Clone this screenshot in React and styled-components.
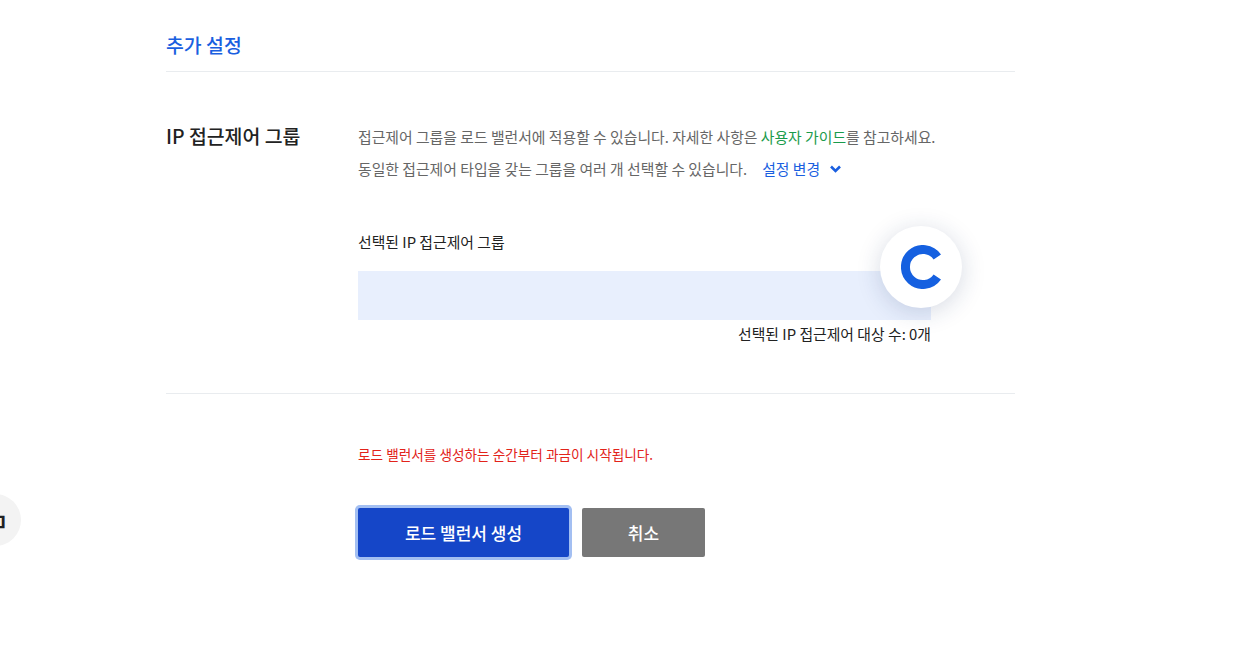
import React from 'react';
import styled, { createGlobalStyle } from 'styled-components';

const GlobalStyle = createGlobalStyle`
  html, body {
    margin: 0;
    padding: 0;
    background: #fff;
    font-family: "Noto Sans CJK KR", "Noto Sans", sans-serif;
  }
  * {
    box-sizing: border-box;
  }
`;

const Page = styled.div`
  position: relative;
  width: 1233px;
  height: 648px;
  overflow: hidden;
`;

const Content = styled.div`
  width: 849px;
  margin-left: 166px;
  padding-top: 29px;
`;

const SectionTitle = styled.h3`
  margin: 0;
  height: 43px;
  border-bottom: 1px solid #e9ecef;
  color: #1a5fe0;
  font-size: 19.4px;
  font-weight: 500;
  line-height: 32px;
`;

const Row = styled.div`
  display: flex;
  padding-top: 49px;
  height: 322px;
  border-bottom: 1px solid #e9ecef;
`;

const RowLabel = styled.div`
  width: 192px;
  flex: none;
  color: #222;
  font-size: 19.4px;
  font-weight: 500;
  line-height: 30px;
`;

const RowBody = styled.div`
  width: 573px;
`;

const Desc = styled.p`
  margin: 0;
  color: #666;
  font-size: 14.85px;
  line-height: 32px;
  white-space: nowrap;
`;

const GuideLink = styled.span`
  color: #1a9b4b;
`;

const ChangeLink = styled.span`
  display: inline-flex;
  align-items: center;
  gap: 10px;
  margin-left: 15px;
  color: #1a5fe0;
`;

const SelectedLabel = styled.div`
  margin-top: 45px;
  color: #222;
  font-size: 14.85px;
  line-height: 24px;
`;

const SelectedBox = styled.div`
  height: 49px;
  margin-top: 17px;
  background: #e8effd;
`;

const SelectedCount = styled.div`
  color: #222;
  font-size: 14.85px;
  line-height: 28px;
  text-align: right;
`;

const Footer = styled.div`
  padding: 48px 0 0 192px;
`;

const Notice = styled.p`
  margin: 0;
  color: #e2231a;
  font-size: 13.65px;
  line-height: 24px;
`;

const Buttons = styled.div`
  display: flex;
  gap: 13px;
  margin-top: 42px;
`;

const Button = styled.button`
  width: ${(p) => (p.$primary ? '211px' : '123px')};
  height: 49px;
  border: 0;
  border-radius: 2px;
  background: ${(p) => (p.$primary ? '#1546c8' : '#777')};
  box-shadow: ${(p) => (p.$primary ? '0 0 0 3px #a3bff2' : 'none')};
  color: #fff;
  font-family: inherit;
  font-size: 17px;
  font-weight: 500;
`;

const LogoBadge = styled.div`
  position: absolute;
  left: 880px;
  top: 226px;
  display: flex;
  align-items: center;
  justify-content: center;
  width: 82px;
  height: 82px;
  border-radius: 50%;
  background: #fff;
  box-shadow: 0 4px 24px rgba(30, 50, 100, 0.18);
`;

const SideBadge = styled.div`
  position: absolute;
  left: -31px;
  top: 494px;
  display: flex;
  align-items: center;
  justify-content: flex-end;
  width: 52px;
  height: 52px;
  padding-right: 12px;
  border-radius: 50%;
  background: #f3f3f3;
  color: #222;
  font-size: 26px;
  font-weight: 500;
`;

const Chevron = () => (
  <svg width="11" height="8" viewBox="0 0 11 8" fill="none">
    <path d="M1 1.5L5.5 6L10 1.5" stroke="#1a5fe0" strokeWidth="2.6" />
  </svg>
);

const LogoC = () => (
  <svg width="41" height="44" viewBox="0 0 41 44" fill="none">
    <path
      d="M36.3 12A17.5 17.5 0 1 0 36.3 32"
      stroke="#1560e0"
      strokeWidth="9"
    />
  </svg>
);

const App = () => (
  <Page>
    <GlobalStyle />
    <Content>
      <SectionTitle>추가 설정</SectionTitle>
      <Row>
        <RowLabel>IP 접근제어 그룹</RowLabel>
        <RowBody>
          <Desc>
            접근제어 그룹을 로드 밸런서에 적용할 수 있습니다. 자세한 사항은 <GuideLink>사용자 가이드</GuideLink>를 참고하세요.
          </Desc>
          <Desc>
            동일한 접근제어 타입을 갖는 그룹을 여러 개 선택할 수 있습니다.
            <ChangeLink>
              설정 변경 <Chevron />
            </ChangeLink>
          </Desc>
          <SelectedLabel>선택된 IP 접근제어 그룹</SelectedLabel>
          <SelectedBox />
          <SelectedCount>선택된 IP 접근제어 대상 수: 0개</SelectedCount>
        </RowBody>
      </Row>
      <Footer>
        <Notice>로드 밸런서를 생성하는 순간부터 과금이 시작됩니다.</Notice>
        <Buttons>
          <Button $primary>로드 밸런서 생성</Button>
          <Button>취소</Button>
        </Buttons>
      </Footer>
    </Content>
    <LogoBadge>
      <LogoC />
    </LogoBadge>
    <SideBadge>ㅁ</SideBadge>
  </Page>
);

export default App;
